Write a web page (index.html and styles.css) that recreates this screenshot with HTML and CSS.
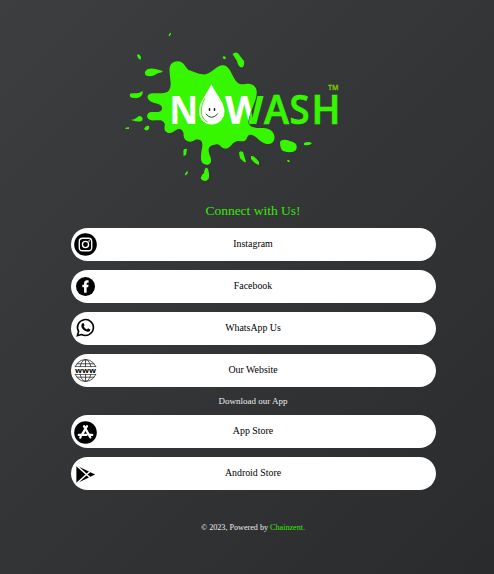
FILE: index.html
```
<!DOCTYPE html>
<html lang="en">
<head>
<meta charset="utf-8">
<title>NOWASH</title>
<link rel="stylesheet" href="styles.css">
</head>
<body>
<main class="page">
  <svg class="logo" viewBox="120 28 225 158" role="img" aria-label="Nowash">
    <defs>
      <path id="splat" d="M169.500 70C169.500 64 173 61.300 177.700 61.300C184 61.300 185 67 188.500 70C193 71.500 199 74.500 205 74.500C213 72.500 216 65.200 223 65.200C232 66 231.500 80 240 84C245 85 248 82.500 252 84.500C259 88 257 96 254 104C251 113 247.500 119 248.500 123C251 130 261 127 267 128.500C275 131 276 138 273 142C268 147 261 142 257 138C251 133 248 134 246.500 139C243 144 239 139 235 142C231 144 230 149 225 148.600C220 148 221 144 216 144.400C207 145 208 151 210 156C213 163 209 165 206.500 164.700C200 164 200.500 158 201.500 151C203 145 203 140 198 139.600C194 139 194 142 190 141.700C184 141 183.500 137 183.500 133C183 130 180 128 177 129.500C173 132 171 134 167 132.500C163 130 165 127 164.800 124C163 119 158 120.500 153 120.500C145.500 120 145.500 113 151 112C156 112 162 113 162 108C162 103 154 104 150 101C146 98 147 94 152 93.300C158 93 164 94 168 91.500C173 86 169.500 79 169.500 70Z"/>
      <clipPath id="inside"><path d="M220 90H256L252 106L249 118L247 127H220Z"/></clipPath>
      <clipPath id="outside"><path d="M256 90H270V127H248L250 115Z"/></clipPath>
    </defs>
    <g class="green">
      <use href="#splat"/>
      <path d="M168.500 35L170.500 32.500L171 34L169.500 36.500ZM137 55Q139 53 141 57L140.500 60L138 58ZM145 72C147 67 154 68 162.500 71C163 73 158 72 155 75C150 77 144 77 145 72ZM130 94C132 92 137 95 142.500 91C143.500 94 141 99 134 98Q129 98 130 94ZM131 120Q136 119 139 116Q143 116 142.500 120Q141 123 131 120ZM125 128L129 127L129 129H126ZM144 129Q146 125 149 126Q150 130 146 130.500ZM222.500 57Q225 55 226 58Q224 61 222.500 57ZM232.500 54Q237 50 240 56L244 61Q245 67 241 67.500Q238 66 237 61ZM183.500 150Q185 148 187 149L186 155L183.500 156ZM185 174Q187 170 188 172Q187 176 185 175ZM204.500 170Q206 166 208 169Q210 175 208.500 179Q205 183 201 179Q200 176 204 173ZM239 153Q240 150 243 152L246 162Q244 163 240 158ZM251 156Q254 155 259 162V165Q255 164 251 159ZM280 142Q282 138 290 141Q299 143 296 150Q292 154 283 151Q280 149 280 142ZM304 143Q308 141 312 143Q310 146 304 145ZM287 160H289L290 162H288Z"/>
    </g>
    <text class="word bold white" x="169.200" y="123.800" textLength="29" lengthAdjust="spacingAndGlyphs">N</text>
    <text class="word bold white" x="225" y="123.800" textLength="38.500" lengthAdjust="spacingAndGlyphs" clip-path="url(#inside)">W</text>
    <text class="word bold green" x="225" y="123.800" textLength="38.500" lengthAdjust="spacingAndGlyphs" clip-path="url(#outside)">W</text>
    <text class="word heavy green" x="264" y="123.500" textLength="25" lengthAdjust="spacingAndGlyphs">A</text>
    <text class="word heavy green" x="289.500" y="123.500" textLength="20" lengthAdjust="spacingAndGlyphs">S</text>
    <text class="word heavy green" x="311.500" y="123.500" textLength="29" lengthAdjust="spacingAndGlyphs">H</text>
    <text class="mark" x="328" y="90">TM</text>
    <path class="white" d="M211.500 84C208 92 199 102 199 111C199 119 204 124.500 211.500 124.500C219 124.500 224.500 119 224.500 111C224.500 102 215 93 211.500 84Z"/>
    <path class="ring" d="M205 98C199.500 108 200 118 207.500 122"/>
    <path class="smile" d="M206 114Q211.500 121 217.500 114"/>
    <path class="eyes" d="M209.500 108.800V110.200M214.500 108.800V110.200"/>
  </svg>

  <h1 class="title">Connect with Us!</h1>
  <nav class="links">
    <a class="link"><svg class="icon" viewBox="0 0 24 24"><circle cx="12" cy="12" r="11.800"/><g class="line-white"><rect x="5.500" y="5.500" width="13" height="13" rx="3.500"/><circle cx="12" cy="12" r="3.200"/><path d="M15.700 8.300H16"/></g></svg><span>Instagram</span></a>
    <a class="link"><svg class="icon" viewBox="0 0 24 24"><circle cx="12" cy="12" r="9.900"/><path class="white" d="M10.500 18.500V12.700H8.700V10.300H10.500V8.800C10.500 6.700 11.700 5.600 13.500 5.600H15.200V8H14.200C13.400 8 13.200 8.500 13.200 9.200V10.300H15.200L14.800 12.700H13.200V18.500Z"/></svg><span>Facebook</span></a>
    <a class="link"><svg class="icon icon-up" viewBox="0 0 24 24"><path class="line" d="M3.500 20.500L4.800 16.200A8.300 8.300 0 1 1 8 19.300Z"/><path d="M9 7.400Q10 7 10.300 8L11 9.600Q11 10.200 10.100 11Q11.300 13.200 13.500 14L14.700 12.800L17 14Q17 16.800 14 16.400Q9.500 15.600 7.800 11.500Q7 9 9 7.400Z"/></svg><span>WhatsApp Us</span></a>
    <a class="link"><svg class="icon" viewBox="0 0 24 24"><g class="line-thin"><circle cx="12" cy="12" r="11.400"/><ellipse cx="12" cy="12" rx="6" ry="11.400"/><path d="M12 .6V23.400M3 5H21M3 19H21M1 8H23M1 16H23"/></g><path class="white" d="M0 8.500H24V15.500H0Z"/><text class="www" x="1" y="14.500" textLength="22" lengthAdjust="spacingAndGlyphs">www</text></svg><span>Our Website</span></a>
  </nav>
  <p class="subtitle">Download our App</p>
  <nav class="links">
    <a class="link"><svg class="icon icon-down" viewBox="0 0 24 24"><circle cx="12" cy="12" r="11.800"/><path class="store" d="M10.500 5.500L17 17M13.500 5.500L8.500 14M5 14.500H13M16.500 14.500H19M7 16.500L6.500 17.300"/></svg><span>App Store</span></a>
    <a class="link"><svg class="icon icon-down" viewBox="0 0 24 24"><path d="M2.500 2.500L22 12L2.500 21.500Z"/><path class="play" d="M2.500 2.500L17.500 16M2.500 21.500L17.500 8"/></svg><span>Android Store</span></a>
  </nav>
  <footer class="footer">© 2023, Powered by <a class="credit">Chainzent.</a></footer>
</main>
</body>
</html>
```
FILE: styles.css
```
* { box-sizing: border-box; }
body {
  margin: 0;
  min-height: 574px;
  background: linear-gradient(135deg, #3d3e3f, #292b2c);
  font-family: "Liberation Serif", serif;
}
.page {
  width: 365px;
  margin-left: 71px;
  padding-top: 28px;
  display: flex;
  flex-direction: column;
  text-align: center;
}
.logo { width: 225px; height: 158px; margin-left: 49px; }
.green { fill: #37f700; }
.white { fill: #fff; }
.word { font-family: "Open Sans", sans-serif; font-size: 40px; font-weight: 600; }
.bold { font-weight: 700; }
.heavy { stroke: #37f700; stroke-width: .7; }
.mark { font: 600 7px "Open Sans", sans-serif; fill: #78c800; stroke: #78c800; stroke-width: .3; }
.ring { fill: none; stroke: #37f700; stroke-width: 1; }
.smile { fill: none; stroke: #222; stroke-width: .9; stroke-linecap: round; }
.eyes { fill: none; stroke: #111; stroke-width: 1.5; stroke-linecap: round; }
.title {
  margin: 17px 1px 9px 0;
  height: 16px;
  line-height: 16px;
  font-size: 13.5px;
  font-weight: 400;
  color: #37e80a;
}
.links { display: flex; flex-direction: column; gap: 9px; }
.link {
  display: grid;
  grid-template-columns: 24px 1fr 25px;
  align-items: center;
  height: 33px;
  padding: 0 3px;
  border-radius: 17px;
  background: #fff;
  color: #000;
  font-size: 9.9px;
  line-height: 12px;
}
.link span { padding-bottom: 1px; }
.icon { width: 23px; height: 23px; }
.icon-up { margin-top: -3px; }
.icon-down { margin-top: 1px; }
.line, .line-white, .line-thin, .store, .play { fill: none; }
.line { stroke: #000; stroke-width: 1.7; }
.line-white { stroke: #fff; stroke-width: 1.4; stroke-linecap: round; }
.line-thin { stroke: #333; stroke-width: .9; }
.www { font: 700 8px "Open Sans", sans-serif; }
.store { stroke: #fff; stroke-width: 2.4; stroke-linecap: round; }
.play { stroke: #fff; stroke-width: 1.5; }
.subtitle { margin: 9px 1px 9px 0; height: 10px; font-size: 9px; line-height: 10px; color: #eee; }
.footer { margin: 33px 1px 0 0; font-size: 8.15px; line-height: 10px; color: #eee; }
.credit { color: #37e80a; }
```
